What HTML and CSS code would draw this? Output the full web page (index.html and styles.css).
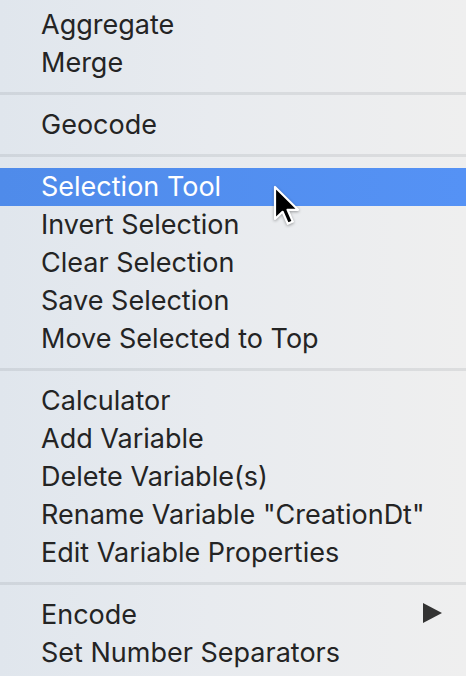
FILE: index.html
```html
<!DOCTYPE html>
<html>
<head>
<meta charset="utf-8">
<link rel="stylesheet" href="styles.css">
</head>
<body>
<div class="menu">
  <div class="item">Aggregate</div>
  <div class="item">Merge</div>
  <div class="sep"></div>
  <div class="item">Geocode</div>
  <div class="sep"></div>
  <div class="item selected">Selection Tool
    <svg class="cursor" width="30" height="42" viewBox="0 0 15 21">
      <path d="M1.5 1 L1.5 17 L5.3 13.4 L7.9 19.4 L10.4 18.3 L7.8 12.4 L13 12.4 Z" fill="#000" stroke="#fff" stroke-width="1.1" stroke-linejoin="round"/>
    </svg>
  </div>
  <div class="item">Invert Selection</div>
  <div class="item">Clear Selection</div>
  <div class="item">Save Selection</div>
  <div class="item">Move Selected to Top</div>
  <div class="sep"></div>
  <div class="item">Calculator</div>
  <div class="item">Add Variable</div>
  <div class="item">Delete Variable(s)</div>
  <div class="item">Rename Variable "CreationDt"</div>
  <div class="item">Edit Variable Properties</div>
  <div class="sep"></div>
  <div class="item sub">Encode<span class="arrow"></span></div>
  <div class="item">Set Number Separators</div>
</div>
</body>
</html>
```

FILE: styles.css
```css
html, body {
  margin: 0;
  padding: 0;
}
body {
  width: 466px;
  height: 676px;
  overflow: hidden;
  background: linear-gradient(90deg, #e0e6ed 0%, #e8ebef 45%, #efefef 100%);
  font-family: Inter, "Noto Sans", sans-serif;
}
.menu {
  padding-top: 6px;
  display: flex;
  flex-direction: column;
}
.item {
  position: relative;
  height: 38px;
  line-height: 38px;
  padding-left: 41px;
  font-size: 27px;
  color: #242424;
  display: flex;
  align-items: center;
  white-space: nowrap;
}
.item.selected {
  background: linear-gradient(90deg, #4f8bea 0%, #5592f5 100%);
  color: #fff;
}
.sep {
  height: 3px;
  margin: 10px 0 11px;
  background: rgba(60, 70, 80, 0.1);
}
.sub {
  justify-content: space-between;
  padding-right: 24px;
}
.arrow {
  width: 0;
  height: 0;
  border-top: 10.5px solid transparent;
  border-bottom: 10.5px solid transparent;
  border-left: 19px solid #333;
  margin-top: -4px;
}
.cursor {
  position: absolute;
  left: 272px;
  top: 17px;
  filter: drop-shadow(0 1px 1.5px rgba(0,0,0,0.35));
}
```
